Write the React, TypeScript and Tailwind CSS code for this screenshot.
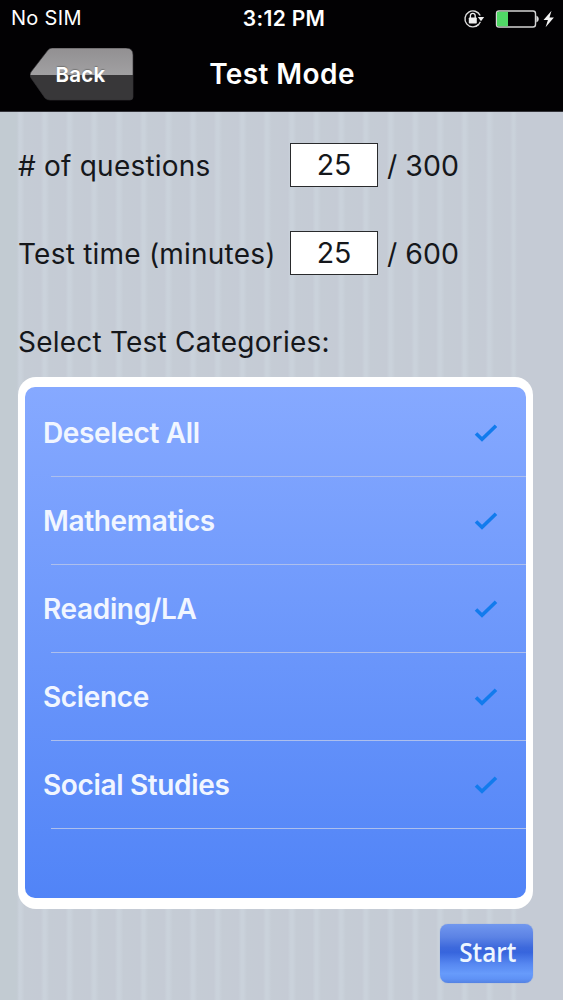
const categories = ["Deselect All", "Mathematics", "Reading/LA", "Science", "Social Studies"];

function StatusBar() {
  return (
    <div className="flex h-[37px] items-center justify-between pr-[8px] pl-[11px] text-white">
      <span className="w-[112px] text-[20px] leading-[37px] tracking-[0.3px]">No SIM</span>
      <span className="text-[21px] leading-[37px] font-semibold tracking-[0.3px]">3:12 PM</span>
      <div className="flex w-[110px] items-center justify-end">
        <svg className="mr-[9px]" width="22" height="20" viewBox="0 0 22 20" fill="none">
          <path d="M15.6 15.6A8 8 0 1 1 17.2 6.5" stroke="#ddd" strokeWidth="1.4" />
          <path d="M17.4 12.8A8 8 0 0 1 12.8 17.4" stroke="#ddd" strokeWidth="1.3" />
          <path d="M14.8 8h6.4L18 12.2z" fill="#eee" />
          <rect x="5.8" y="8.5" width="8" height="6" rx="0.7" fill="#eee" />
          <path d="M7.4 9V6.8a2.4 2.4 0 0 1 4.8 0V9" stroke="#eee" strokeWidth="1.3" />
        </svg>
        <svg width="61" height="20" viewBox="0 0 61 20">
          <rect x="2.5" y="2" width="39" height="16" rx="2.5" fill="none" stroke="#d4d4d4" strokeWidth="1.4" />
          <path d="M4 2.8h10v14.4H4a1 1 0 0 1-1-1V3.8a1 1 0 0 1 1-1z" fill="#50d866" />
          <path d="M42.4 6.5q2.4 1 2.4 3.5t-2.4 3.5z" fill="#ddd" />
          <path d="M57.5 1.8 49.5 11h4.4l-2.3 7.2L59.9 8.6h-4.4z" fill="#f4f4f4" />
        </svg>
      </div>
    </div>
  );
}

function NavBar() {
  return (
    <div className="grid h-[75px] grid-cols-[30px_103px_1fr_132px] items-center text-white">
      <button className="relative col-start-2 mt-[-1px] h-[53px] w-[104px]">
        <svg className="absolute inset-0" width="104" height="53" viewBox="0 0 104 53">
          <defs>
            <linearGradient id="backTop" x1="0" y1="0" x2="0" y2="1">
              <stop offset="0" stopColor="#929092" />
              <stop offset="1" stopColor="#a1a0a2" />
            </linearGradient>
            <clipPath id="backShape">
              <path d="M22 0H96q7 0 7 7V49q0 3-3 3H20Q17 52 15 50L1 30Q-1 27 1 24L18 2Q20 0 22 0z" />
            </clipPath>
          </defs>
          <g clipPath="url(#backShape)">
            <rect width="104" height="27" fill="url(#backTop)" />
            <rect y="27" width="104" height="26" fill="#383739" />
          </g>
          <path d="M22 0H96q7 0 7 7V49q0 3-3 3H20Q17 52 15 50L1 30Q-1 27 1 24L18 2Q20 0 22 0z" fill="none" stroke="#343336" strokeOpacity=".65" />
        </svg>
        <span className="relative block pr-[3px] text-[20.5px] leading-[53px] font-semibold tracking-[0.3px] [text-shadow:0_-1px_1px_#777]">Back</span>
      </button>
      <h1 className="text-center text-[28px] leading-[75px] font-semibold tracking-[0.4px] whitespace-nowrap">Test Mode</h1>
    </div>
  );
}

function SettingRow({ label, value, max }: { label: string; value: string; max: string }) {
  return (
    <div className="flex h-[88px] items-center text-[#15171b]">
      <label className="mt-[-2px] w-[272px] text-[28px] leading-[40px] tracking-[0.22px] whitespace-nowrap">{label}</label>
      <div className="mt-[-4px] h-[44px] w-[88px] border-[1.5px] border-[#292a2c] bg-white text-center text-[28.5px] leading-[41px]">{value}</div>
      <span className="mt-[-2px] ml-[9px] text-[28.5px] leading-[40px]">/ {max}</span>
    </div>
  );
}

export default function App() {
  return (
    <div className="flex h-[1000px] w-[563px] flex-col overflow-hidden bg-[#c5cbd4] font-['Inter','Liberation_Sans',sans-serif]">
      <header className="h-[112px] shrink-0 border-b border-[#34343a] bg-[#020103]">
        <StatusBar />
        <NavBar />
      </header>
      <main className="flex-1 bg-[linear-gradient(90deg,#c2cbd2_0px,#c2cbd2_16px,transparent_19px,transparent_514px,#c5cbd5_518px),repeating-linear-gradient(90deg,#c5ccd5_0px,#c5cbd5_16px,#cad2db_19px,#cad2db_21px,#c5ccd5_24.7px)] pr-[30px] pl-[18px]">
        <div className="pt-[11px]">
          <SettingRow label="# of questions" value="25" max="300" />
          <SettingRow label="Test time (minutes)" value="25" max="600" />
        </div>
        <h2 className="h-[78px] text-[28px] leading-[86px] tracking-[0.22px] text-[#15171b]">Select Test Categories:</h2>
        <section className="h-[532px] w-[515px] rounded-[18px] bg-white px-[7px] pt-[10px] pb-[11px]">
          <div className="h-full overflow-hidden rounded-[10px] bg-linear-to-b from-[#86a9ff] to-[#5184f7] pt-[2px]">
            {categories.map((name) => (
              <div key={name} className="flex h-[88px] flex-col">
                <div className="flex h-[87px] items-center justify-between pr-[28px] pl-[18px]">
                  <span className="text-[28px] leading-[40px] font-semibold tracking-[-0.35px] text-[#f1f6ff]">{name}</span>
                  <svg width="24" height="20" viewBox="0 0 24 20" fill="none">
                    <path d="M2 10.5 8 16.3 22 2.8" stroke="#127bed" strokeWidth="3.6" />
                  </svg>
                </div>
                <div className="ml-[26px] h-px shrink-0 bg-[#adbfed]" />
              </div>
            ))}
          </div>
        </section>
        <div className="flex justify-end pt-[15px]">
          <button className="h-[59px] w-[93px] rounded-[8px] bg-[linear-gradient(180deg,#7197ee_0%,#5c83e5_22%,#3d69dc_40%,#3765dd_48%,#5788f1_68%,#679bfb_84%,#5f92f6_93%,#5482e2_100%)] pb-[4px] pl-[2px] font-['Open_Sans','Noto_Sans',sans-serif] text-[27px] leading-[52px] font-semibold text-[#edf6ff] shadow-[0_0_1px_#7898db]"><span className="inline-block scale-x-[0.9]">Start</span></button>
        </div>
      </main>
    </div>
  );
}
